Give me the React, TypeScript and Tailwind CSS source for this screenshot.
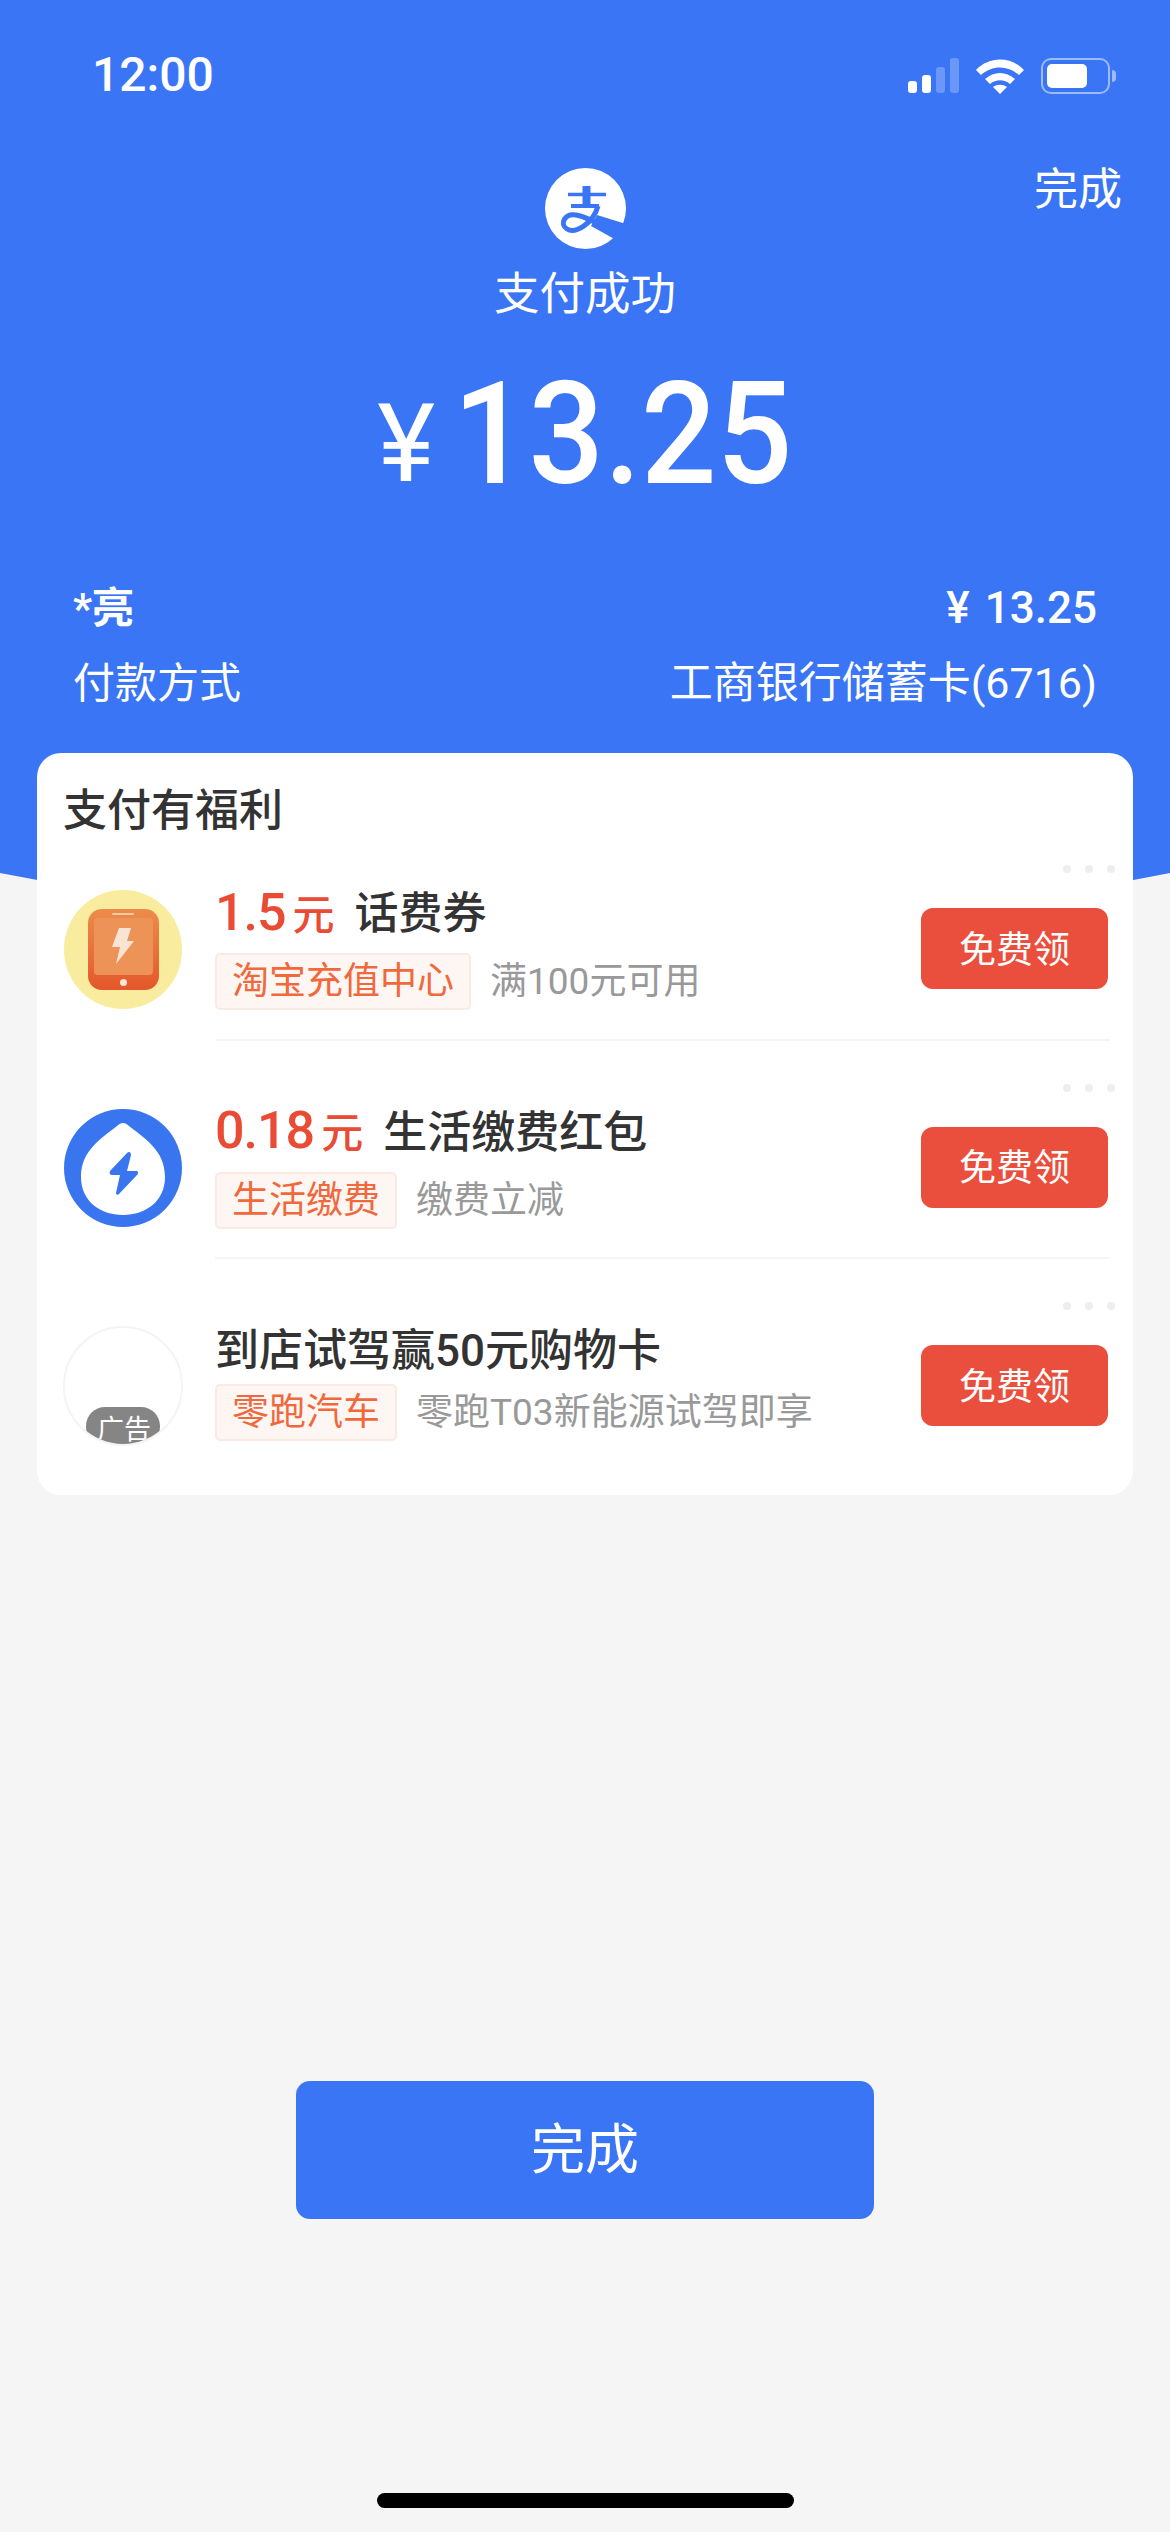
const sans = 'font-[Roboto,"Noto_Sans_CJK_SC",sans-serif]';

type Offer = {
  amount?: string;
  title: string;
  tag: string;
  desc: string;
  icon: React.ReactNode;
  last?: boolean;
};

function StatusIcons() {
  return (
    <div className="flex items-end">
      <svg width="66" height="36" viewBox="0 0 66 36" className="mr-[2px]" fill="white">
        <rect x="0" y="23" width="9" height="12" rx="3" />
        <rect x="14" y="17" width="9" height="18" rx="3" />
        <rect x="28" y="9" width="9" height="26" rx="3" opacity="0.25" />
        <rect x="42" y="0" width="9" height="35" rx="3" opacity="0.25" />
      </svg>
      <svg width="50" height="36" viewBox="0 0 50 36" className="-ml-[1px] mr-[16px]" fill="white">
        <path d="M1 12 C14 -2 36 -2 49 12 L44 17 C33 7 17 7 6 17 Z" />
        <path d="M10 21 C19 13 31 13 40 21 L35 26 C29 21 21 21 15 26 Z" />
        <path d="M18 29 C22 26 28 26 32 29 L25 36 Z" />
      </svg>
      <div className="flex items-center">
        <div className="flex h-[36px] w-[69px] items-center rounded-[10px] border-[2.5px] border-white/50 p-[4px]">
          <div className="h-full w-[40px] rounded-[5px] bg-white" />
        </div>
        <div className="ml-[2px] h-[12px] w-[4px] rounded-r-full bg-white/50" />
      </div>
    </div>
  );
}

function AlipayLogo() {
  return (
    <svg width="81" height="81" viewBox="0 0 81 81">
      <circle cx="40.5" cy="40.5" r="40.5" fill="white" />
      <g fill="none" stroke="#3a75f6">
        <path d="M23 26.5 H61" strokeWidth="3.5" />
        <path d="M41.5 18 V37" strokeWidth="8" />
        <path d="M26 38 H54" strokeWidth="4" />
        <path d="M53 38 C48 56 30 66 22 61 C14 56 20 45 31 47 C42 49 58 58 71 66" strokeWidth="5" />
      </g>
      <path d="M52 47 L81 56 L73 73 L46 58 Z" fill="#3a75f6" />
    </svg>
  );
}

function PhoneIcon() {
  return (
    <div className="flex h-[119px] w-[118px] items-center justify-center rounded-full bg-[#faec9f]">
      <div className="flex h-[81px] w-[71px] flex-col items-center rounded-[14px] bg-gradient-to-b from-[#ec8c4a] to-[#e4572a] px-[6px] pt-[4px]">
        <div className="h-[2px] w-[22px] rounded-full bg-[#f6c9a0]" />
        <div className="mt-[3px] flex h-[57px] w-full items-center justify-center rounded-[4px] bg-[#ee9358]">
          <svg width="22" height="36" viewBox="0 0 22 36" fill="#f8e4d3">
            <path d="M7 0 H19 L15 13 H22 L4 36 L8 19 H0 Z" />
          </svg>
        </div>
        <div className="mt-[4px] h-[7px] w-[7px] rounded-full bg-[#fbe6d8]" />
      </div>
    </div>
  );
}

function DropIcon() {
  return (
    <svg width="118" height="118" viewBox="0 0 118 118">
      <circle cx="59" cy="59" r="59" fill="#3a75f0" />
      <path
        d="M59 14 C61 14 63 15 65 17 C80 29 101 41 101 68 C101 92 82 106 59 106 C36 106 17 92 17 68 C17 41 38 29 53 17 C55 15 57 14 59 14 Z"
        fill="white"
      />
      <path
        d="M63 44 L46 62 C45 64 46 66 48 66 L56 66 L52 84 C52 86 54 86 55 85 L73 66 C75 64 74 62 72 62 L63 62 L67 46 C67 43 65 42 63 44 Z"
        fill="#3a75f0"
      />
    </svg>
  );
}

function AdIcon() {
  return (
    <div className="-ml-[1px] flex h-[120px] w-[120px] flex-col items-center justify-end overflow-hidden rounded-full border-2 border-[#f4f4f4] bg-white">
      <div className="-mb-[2px] h-[39px] w-[74px] overflow-hidden rounded-[19px] bg-[#858585] pl-[2px] pt-[6px] text-center text-[27px] leading-[34px] text-white">
        广告
      </div>
    </div>
  );
}

const offers: Offer[] = [
  { amount: '1.5', title: '话费券', tag: '淘宝充值中心', desc: '满100元可用', icon: <PhoneIcon /> },
  { amount: '0.18', title: '生活缴费红包', tag: '生活缴费', desc: '缴费立减', icon: <DropIcon /> },
  { title: '到店试驾赢50元购物卡', tag: '零跑汽车', desc: '零跑T03新能源试驾即享', icon: <AdIcon />, last: true },
];

function OfferRow({ offer }: { offer: Offer }) {
  return (
    <div className="flex h-[218.5px] items-center">
      <div className="mr-[33px] w-[118px] shrink-0">{offer.icon}</div>
      <div className={`relative flex h-[200.5px] flex-1 items-start self-start ${offer.last ? '' : 'border-b-2 border-[#f5f5f5]'}`}>
        <div className="flex-1 pt-[46px]">
          <div className="flex h-[56px] items-center whitespace-nowrap">
            {offer.amount && (
              <span className="mr-[20px] flex items-baseline font-medium text-[#e94b35]">
                <span className="text-[52px] leading-[56px] tracking-[-1px]">{offer.amount}</span>
                <span className="ml-[7px] text-[42px] leading-[56px]">元</span>
              </span>
            )}
            <span className="text-[44px] font-medium leading-[56px] text-[#333333]">{offer.title}</span>
          </div>
          <div className={`flex items-center whitespace-nowrap ${offer.amount ? 'mt-[11px]' : 'mt-[5px]'}`}>
            <span className="flex h-[57px] items-center rounded-[5px] border-2 border-[#fbe9e4] bg-[#fef6f3] px-[15px] text-[37px] leading-none text-[#f0693c]">
              {offer.tag}
            </span>
            <span className="ml-[19px] text-[37px] leading-none text-[#999999]">{offer.desc}</span>
          </div>
        </div>
        <div className="absolute -right-[5px] top-[25px] flex gap-[14px]">
          <span className="h-[8px] w-[8px] rounded-full bg-[#eeeeee]" />
          <span className="h-[8px] w-[8px] rounded-full bg-[#eeeeee]" />
          <span className="h-[8px] w-[8px] rounded-full bg-[#eeeeee]" />
        </div>
        <button className="mr-[2px] mt-[68px] flex h-[81px] w-[187px] items-center justify-center rounded-[12px] bg-[#ea4f3d] pt-[3px] text-[37px] leading-none text-white">
          免费领
        </button>
      </div>
    </div>
  );
}

export default function App() {
  return (
    <div className={`${sans} relative flex h-[2532px] w-[1170px] flex-col overflow-hidden bg-[#f5f5f5]`}>
      <header className="relative h-[873px] shrink-0 bg-[#3a75f6] text-white">
        <div className="flex items-end justify-between pl-[92px] pr-[54px] pt-[56px]">
          <span className="text-[48px] font-medium leading-[38px]">12:00</span>
          <StatusIcons />
        </div>
        <span className="absolute right-[48px] top-[161px] text-[44px] leading-[58px]">完成</span>
        <div className="mt-[74px] flex flex-col items-center">
          <AlipayLogo />
          <div className="mt-[17px] text-[45.5px] leading-[58px]">支付成功</div>
          <div className="mt-[45px] flex h-[130px] items-end">
            <span className="text-[110px] leading-[110px]">¥</span>
            <span className="ml-[18px] -mr-[25px] inline-block origin-left scale-x-[0.93] text-[143px] font-medium leading-[130px]">
              13.25
            </span>
          </div>
        </div>
        <div className="mt-[82px] px-[73px]">
          <div className="flex h-[54px] items-center justify-between text-[42px] font-bold">
            <span>*亮</span>
            <span className="flex text-[44px] font-medium">
              <span className="mr-[15px]">¥</span>
              13.25
            </span>
          </div>
          <div className="mt-[21px] flex h-[54px] items-center justify-between text-[42px]">
            <span>付款方式</span>
            <span className="text-[43px]">工商银行储蓄卡(6716)</span>
          </div>
        </div>
      </header>
      <svg className="block shrink-0" width="1170" height="60" viewBox="0 0 1170 60">
        <path d="M0 0 H1170 Q585 116 0 0 Z" fill="#3a75f6" />
      </svg>

      <section className="relative mx-[37px] -mt-[180px] h-[742px] rounded-[24px] bg-white pl-[27px] pr-[23px]">
        <h2 className="-ml-[1px] flex h-[111px] items-center pt-[4px] text-[44px] font-medium text-[#333333]">支付有福利</h2>
        <div className="-mt-[24px]">
          {offers.map((offer) => (
            <OfferRow key={offer.title} offer={offer} />
          ))}
        </div>
      </section>

      <button className="mx-auto mt-[586px] flex h-[138px] w-[578px] items-center justify-center rounded-[14px] bg-[#3a75f6] text-[54px] text-white">
        完成
      </button>
      <div className="mx-auto mt-[274px] h-[15px] w-[417px] rounded-full bg-black" />
    </div>
  );
}
